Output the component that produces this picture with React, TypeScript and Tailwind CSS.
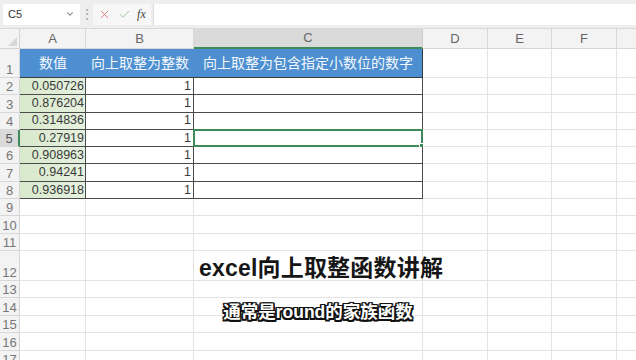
import { X, Check, ChevronDown } from 'lucide-react'

const font = 'font-["Liberation_Sans","Noto_Sans_CJK_SC",sans-serif]'

const values = ['0.050726', '0.876204', '0.314836', '0.27919', '0.908963', '0.94241', '0.936918']

const columns = [
  { label: 'A', w: 'w-[66px]' },
  { label: 'B', w: 'w-[108px]' },
  { label: 'C', w: 'w-[229px]' },
  { label: 'D', w: 'w-[65px]' },
  { label: 'E', w: 'w-[64px]' },
  { label: 'F', w: 'w-[65px]' },
  { label: '', w: 'w-[40px]' },
]

const rows = [
  { n: 1, h: 'h-[29px]' },
  { n: 2, h: 'h-[17.3px]' },
  { n: 3, h: 'h-[17.3px]' },
  { n: 4, h: 'h-[17.3px]' },
  { n: 5, h: 'h-[17.3px]' },
  { n: 6, h: 'h-[17.3px]' },
  { n: 7, h: 'h-[17.3px]' },
  { n: 8, h: 'h-[17.3px]' },
  { n: 9, h: 'h-[17.3px]' },
  { n: 10, h: 'h-[17.3px]' },
  { n: 11, h: 'h-[17.3px]' },
  { n: 12, h: 'h-[30px]' },
  { n: 13, h: 'h-[17.5px]' },
  { n: 14, h: 'h-[17.5px]' },
  { n: 15, h: 'h-[17.5px]' },
  { n: 16, h: 'h-[17.5px]' },
  { n: 17, h: 'h-[17.5px]' },
]

const headers = ['数值', '向上取整为整数', '向上取整为包含指定小数位的数字']

function Cell({ row, col }: { row: number; col: number }) {
  const w = columns[col].w
  if (row === 1 && col < 3) {
    return (
      <div className={`${w} shrink-0 h-full bg-[#4d8fd0] text-[#f4f8fc] text-[14px] flex items-center justify-center border-b border-[#3c3c3c] ${col === 2 ? 'border-r border-r-[#3c3c3c]' : ''}`}>
        {headers[col]}
      </div>
    )
  }
  if (row >= 2 && row <= 8 && col < 3) {
    if (col === 0) {
      return (
        <div className={`${w} shrink-0 h-full bg-gradient-to-r from-[#d8e9cc] to-[#e6f1df] border-b border-r border-[#4a4a4a] text-[12.5px] text-[#3a3a3a] flex items-center justify-end pr-[1px] leading-none`}>
          {values[row - 2]}
        </div>
      )
    }
    if (col === 1) {
      return (
        <div className={`${w} shrink-0 h-full bg-white border-b border-r border-[#4a4a4a] text-[12.5px] text-[#3a3a3a] flex items-center justify-end pr-[2px] leading-none`}>
          1
        </div>
      )
    }
    return (
      <div className={`${w} shrink-0 h-full bg-white border-b border-r border-[#4a4a4a] relative`}>
        {row === 5 && (
          <div className="absolute -inset-x-[1px] -top-[1px] -bottom-[1px] border-2 border-[#3f8a5a]">
            <div className="absolute -right-[3px] -bottom-[3px] w-[5px] h-[5px] bg-[#3f8a5a] border border-white" />
          </div>
        )}
      </div>
    )
  }
  return <div className={`${w} shrink-0 h-full bg-white border-b border-r border-[#e4e4e4]`} />
}

export default function App() {
  return (
    <div className={`w-[636px] h-[360px] overflow-hidden bg-white relative ${font}`}>
      {/* formula bar */}
      <div className="h-[29px] bg-[#eeeeee] flex items-center border-b border-[#d9d9d9]">
        <div className="ml-[3px] w-[77px] h-[21px] bg-white flex items-center justify-between px-[5px] text-[11px] text-[#333]">
          <span>C5</span>
          <ChevronDown className="w-[10px] h-[10px] text-[#777]" strokeWidth={2.5} />
        </div>
        <span className="w-[13px] text-center text-[12px] text-[#999] leading-none">⋮</span>
        <div className="w-[58px] h-[21px] bg-[#f7f7f7] flex items-center justify-around px-[2px]">
          <X className="w-[13px] h-[13px] text-[#e07070]" strokeWidth={1.6} />
          <Check className="w-[13px] h-[13px] text-[#8cc49b]" strokeWidth={1.6} />
          <span className="text-[12px] italic font-['Liberation_Serif',serif] text-[#444]">fx</span>
        </div>
        <div className="ml-[2px] flex-1 h-[21px] bg-white border-l border-[#dcdcdc]" />
      </div>

      {/* column header */}
      <div className="flex h-[20px]">
        <div className="w-[20px] shrink-0 bg-[#f3f3f3] border-r border-b border-[#d4d4d4] relative">
          <div className="absolute right-[2px] bottom-[2px] w-0 h-0 border-l-[9px] border-l-transparent border-b-[9px] border-b-[#d8d8d8]" />
        </div>
        {columns.map((c, i) => (
          <div
            key={i}
            className={`${c.w} shrink-0 flex items-center justify-center text-[13px] text-[#666] border-r ${
              i === 2
                ? 'bg-[#dadada] border-b-2 border-b-[#3f8a5a] border-r-[#cfcfcf]'
                : 'bg-[#f3f3f3] border-b border-[#d8d8d8]'
            }`}
          >
            {c.label}
          </div>
        ))}
      </div>

      {/* rows */}
      {rows.map((r) => (
        <div key={r.n} className={`flex ${r.h}`}>
          <div
            className={`w-[20px] shrink-0 h-full flex items-end justify-center text-[13px] leading-none pb-[1px] border-b border-[#d8d8d8] ${
              r.n === 5
                ? 'bg-[#dadada] text-[#555] border-r-2 border-r-[#3f8a5a]'
                : 'bg-[#f3f3f3] text-[#777] border-r border-r-[#d4d4d4]'
            }`}
          >
            {r.n}
          </div>
          {columns.map((_, ci) => (
            <Cell key={ci} row={r.n} col={ci} />
          ))}
        </div>
      ))}

      {/* video caption overlay */}
      <div className="absolute left-0 right-0 top-[252px] h-[30px] flex items-center justify-center pl-[6px] pt-[3px] text-[23px] font-bold text-[#161616] tracking-[0.2px]">
        excel向上取整函数讲解
      </div>
      <div className="absolute left-0 right-0 top-[300px] h-[24px] flex items-center justify-center text-[17.5px] font-bold text-white [text-shadow:-1.5px_-1.5px_0_#111,1.5px_-1.5px_0_#111,-1.5px_1.5px_0_#111,1.5px_1.5px_0_#111,0_1.5px_0_#111,0_-1.5px_0_#111,1.5px_0_0_#111,-1.5px_0_0_#111]">
        通常是round的家族函数
      </div>
    </div>
  )
}
